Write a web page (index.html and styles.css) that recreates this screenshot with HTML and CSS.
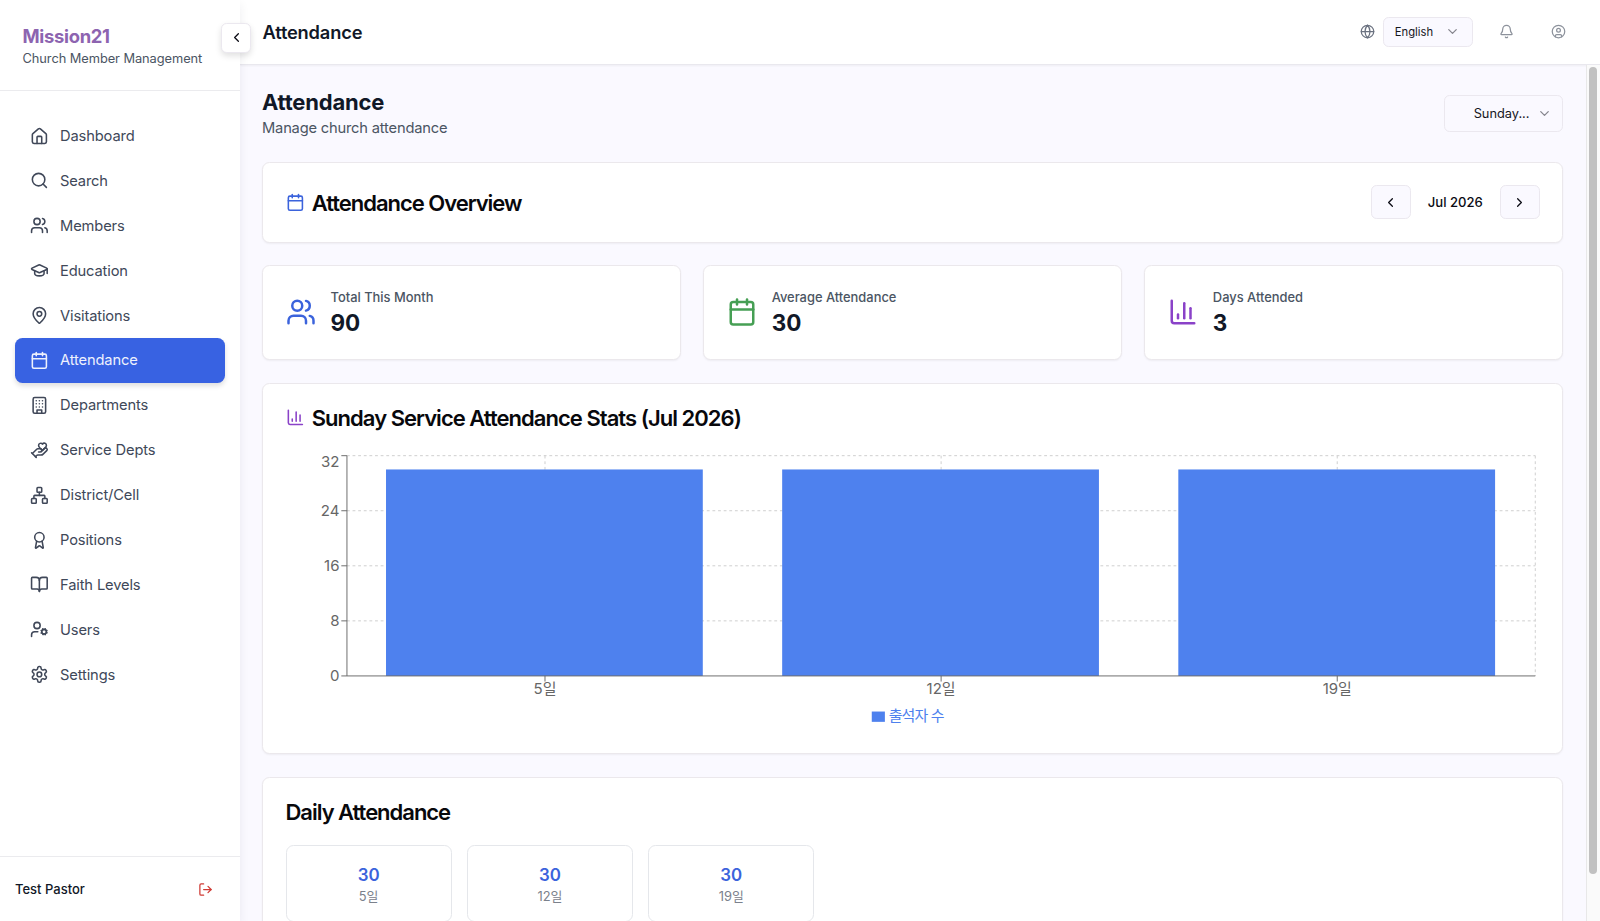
FILE: index.html
```html
<!DOCTYPE html>
<html lang="en">
<head>
    <meta charset="UTF-8">
    <meta name="viewport" content="width=device-width, initial-scale=1.0">
    <title>Mission21 - Attendance</title>
    <link rel="stylesheet" href="styles.css">
</head>
<body>
    <!-- icons -->
    <svg class="sprite" width="0" height="0">
        <symbol id="home" viewBox="0 0 24 24"><path d="M15 21v-8a1 1 0 0 0-1-1h-4a1 1 0 0 0-1 1v8"/><path d="M3 10a2 2 0 0 1 .709-1.528l7-5.999a2 2 0 0 1 2.582 0l7 5.999A2 2 0 0 1 21 10v9a2 2 0 0 1-2 2H5a2 2 0 0 1-2-2z"/></symbol>
        <symbol id="search" viewBox="0 0 24 24"><circle cx="11" cy="11" r="8"/><path d="m21 21-4.3-4.3"/></symbol>
        <symbol id="users" viewBox="0 0 24 24"><path d="M16 21v-2a4 4 0 0 0-4-4H6a4 4 0 0 0-4 4v2"/><circle cx="9" cy="7" r="4"/><path d="M22 21v-2a4 4 0 0 0-3-3.87"/><path d="M16 3.13a4 4 0 0 1 0 7.75"/></symbol>
        <symbol id="cap" viewBox="0 0 24 24"><path d="M21.42 10.922a1 1 0 0 0-.019-1.838L12.83 5.18a2 2 0 0 0-1.66 0L2.6 9.08a1 1 0 0 0 0 1.832l8.57 3.908a2 2 0 0 0 1.66 0z"/><path d="M22 10v6"/><path d="M6 12.5V16a6 3 0 0 0 12 0v-3.5"/></symbol>
        <symbol id="pin" viewBox="0 0 24 24"><path d="M20 10c0 4.993-5.539 10.193-7.399 11.799a1 1 0 0 1-1.202 0C9.539 20.193 4 14.993 4 10a8 8 0 0 1 16 0"/><circle cx="12" cy="10" r="3"/></symbol>
        <symbol id="calendar" viewBox="0 0 24 24"><path d="M8 2v4"/><path d="M16 2v4"/><rect width="18" height="18" x="3" y="4" rx="2"/><path d="M3 10h18"/></symbol>
        <symbol id="building" viewBox="0 0 24 24"><rect width="16" height="20" x="4" y="2" rx="2"/><path d="M9 22v-4h6v4"/><path d="M8 6h.01M16 6h.01M12 6h.01M12 10h.01M12 14h.01M16 10h.01M16 14h.01M8 10h.01M8 14h.01"/></symbol>
        <symbol id="hand" viewBox="0 0 24 24"><path d="M11 14h2a2 2 0 1 0 0-4h-3c-.6 0-1.1.2-1.4.6L3 16"/><path d="m7 20 1.6-1.4c.3-.4.8-.6 1.4-.6h4c1.1 0 2.1-.4 2.8-1.2l4.6-4.4a2 2 0 0 0-2.75-2.91l-4.2 3.9"/><path d="m2 15 6 6"/><path d="M19.5 8.5c.7-.7 1.5-1.6 1.5-2.7A2.73 2.73 0 0 0 16 4a2.78 2.78 0 0 0-5 1.8c0 1.2.8 2 1.5 2.8L16 12Z"/></symbol>
        <symbol id="network" viewBox="0 0 24 24"><rect x="16" y="16" width="6" height="6" rx="1"/><rect x="2" y="16" width="6" height="6" rx="1"/><rect x="9" y="2" width="6" height="6" rx="1"/><path d="M5 16v-3a1 1 0 0 1 1-1h12a1 1 0 0 1 1 1v3"/><path d="M12 12V8"/></symbol>
        <symbol id="award" viewBox="0 0 24 24"><path d="m15.477 12.89 1.515 8.526a.5.5 0 0 1-.81.47l-3.58-2.687a1 1 0 0 0-1.197 0l-3.586 2.686a.5.5 0 0 1-.81-.469l1.514-8.526"/><circle cx="12" cy="8" r="6"/></symbol>
        <symbol id="book" viewBox="0 0 24 24"><path d="M12 7v14"/><path d="M3 18a1 1 0 0 1-1-1V4a1 1 0 0 1 1-1h5a4 4 0 0 1 4 4 4 4 0 0 1 4-4h5a1 1 0 0 1 1 1v13a1 1 0 0 1-1 1h-6a3 3 0 0 0-3 3 3 3 0 0 0-3-3z"/></symbol>
        <symbol id="usercog" viewBox="0 0 24 24"><circle cx="18" cy="15" r="3"/><circle cx="9" cy="7" r="4"/><path d="M10 15H6a4 4 0 0 0-4 4v2"/><path d="m21.7 16.4-.9-.3M15.2 13.9l-.9-.3M16.6 18.7l.3-.9M19.1 12.2l.3-.9M19.6 18.7l-.4-1M16.8 12.3l-.4-1M14.3 16.6l1-.4M20.7 13.8l1-.4"/></symbol>
        <symbol id="settings" viewBox="0 0 24 24"><path d="M12.22 2h-.44a2 2 0 0 0-2 2v.18a2 2 0 0 1-1 1.73l-.43.25a2 2 0 0 1-2 0l-.15-.08a2 2 0 0 0-2.73.73l-.22.38a2 2 0 0 0 .73 2.73l.15.1a2 2 0 0 1 1 1.72v.51a2 2 0 0 1-1 1.74l-.15.09a2 2 0 0 0-.73 2.73l.22.38a2 2 0 0 0 2.73.73l.15-.08a2 2 0 0 1 2 0l.43.25a2 2 0 0 1 1 1.73V20a2 2 0 0 0 2 2h.44a2 2 0 0 0 2-2v-.18a2 2 0 0 1 1-1.73l.43-.25a2 2 0 0 1 2 0l.15.08a2 2 0 0 0 2.73-.73l.22-.39a2 2 0 0 0-.73-2.73l-.15-.08a2 2 0 0 1-1-1.74v-.5a2 2 0 0 1 1-1.74l.15-.09a2 2 0 0 0 .73-2.73l-.22-.38a2 2 0 0 0-2.73-.73l-.15.08a2 2 0 0 1-2 0l-.43-.25a2 2 0 0 1-1-1.73V4a2 2 0 0 0-2-2z"/><circle cx="12" cy="12" r="3"/></symbol>
        <symbol id="logout" viewBox="0 0 24 24"><path d="M9 21H5a2 2 0 0 1-2-2V5a2 2 0 0 1 2-2h4"/><path d="m16 17 5-5-5-5"/><path d="M21 12H9"/></symbol>
        <symbol id="globe" viewBox="0 0 24 24"><circle cx="12" cy="12" r="10"/><path d="M12 2a14.5 14.5 0 0 0 0 20 14.5 14.5 0 0 0 0-20"/><path d="M2 12h20"/></symbol>
        <symbol id="bell" viewBox="0 0 24 24"><path d="M10.268 21a2 2 0 0 0 3.464 0"/><path d="M3.262 15.326A1 1 0 0 0 4 17h16a1 1 0 0 0 .74-1.673C19.41 13.956 18 12.499 18 8A6 6 0 0 0 6 8c0 4.499-1.411 5.956-2.738 7.326"/></symbol>
        <symbol id="user" viewBox="0 0 24 24"><circle cx="12" cy="12" r="10"/><circle cx="12" cy="10" r="3"/><path d="M7 20.662V19a2 2 0 0 1 2-2h6a2 2 0 0 1 2 2v1.662"/></symbol>
        <symbol id="chart" viewBox="0 0 24 24"><path d="M3 3v16a2 2 0 0 0 2 2h16"/><path d="M18 17V9"/><path d="M13 17V5"/><path d="M8 17v-3"/></symbol>
        <symbol id="left" viewBox="0 0 24 24"><path d="m15 18-6-6 6-6"/></symbol>
        <symbol id="right" viewBox="0 0 24 24"><path d="m9 18 6-6-6-6"/></symbol>
        <symbol id="down" viewBox="0 0 24 24"><path d="m6 9 6 6 6-6"/></symbol>
    </svg>

    <div class="app">
        <aside class="sidebar">
            <div class="brand">
                <h1>Mission21</h1>
                <p>Church Member Management</p>
            </div>
            <button class="toggle"><svg class="icon small"><use href="#left"/></svg></button>
            <nav class="nav">
                <a class="nav-item"><svg class="icon"><use href="#home"/></svg><span>Dashboard</span></a>
                <a class="nav-item"><svg class="icon"><use href="#search"/></svg><span>Search</span></a>
                <a class="nav-item"><svg class="icon"><use href="#users"/></svg><span>Members</span></a>
                <a class="nav-item"><svg class="icon"><use href="#cap"/></svg><span>Education</span></a>
                <a class="nav-item"><svg class="icon"><use href="#pin"/></svg><span>Visitations</span></a>
                <a class="nav-item active"><svg class="icon"><use href="#calendar"/></svg><span>Attendance</span></a>
                <a class="nav-item"><svg class="icon"><use href="#building"/></svg><span>Departments</span></a>
                <a class="nav-item"><svg class="icon"><use href="#hand"/></svg><span>Service Depts</span></a>
                <a class="nav-item"><svg class="icon"><use href="#network"/></svg><span>District/Cell</span></a>
                <a class="nav-item"><svg class="icon"><use href="#award"/></svg><span>Positions</span></a>
                <a class="nav-item"><svg class="icon"><use href="#book"/></svg><span>Faith Levels</span></a>
                <a class="nav-item"><svg class="icon"><use href="#usercog"/></svg><span>Users</span></a>
                <a class="nav-item"><svg class="icon"><use href="#settings"/></svg><span>Settings</span></a>
            </nav>
            <div class="account">
                <span>Test Pastor</span>
                <svg class="icon small"><use href="#logout"/></svg>
            </div>
        </aside>

        <div class="main">
            <header class="topbar">
                <h2>Attendance</h2>
                <div class="tools">
                    <svg class="icon small globe"><use href="#globe"/></svg>
                    <button class="select lang"><span>English</span><svg class="icon small"><use href="#down"/></svg></button>
                    <svg class="icon small bell"><use href="#bell"/></svg>
                    <svg class="icon small user"><use href="#user"/></svg>
                </div>
            </header>

            <div class="body">
                <main class="content">
                    <div class="page-head">
                        <div>
                            <h1>Attendance</h1>
                            <p>Manage church attendance</p>
                        </div>
                        <button class="select service"><span>Sunday...</span><svg class="icon small"><use href="#down"/></svg></button>
                    </div>

                    <section class="card overview">
                        <h3 class="title"><svg class="icon blue"><use href="#calendar"/></svg><span>Attendance Overview</span></h3>
                        <div class="month">
                            <button class="step"><svg class="icon small"><use href="#left"/></svg></button>
                            <span>Jul 2026</span>
                            <button class="step"><svg class="icon small"><use href="#right"/></svg></button>
                        </div>
                    </section>

                    <div class="stats">
                        <section class="card stat">
                            <svg class="icon big blue"><use href="#users"/></svg>
                            <div><p>Total This Month</p><strong>90</strong></div>
                        </section>
                        <section class="card stat">
                            <svg class="icon big green"><use href="#calendar"/></svg>
                            <div><p>Average Attendance</p><strong>30</strong></div>
                        </section>
                        <section class="card stat">
                            <svg class="icon big purple"><use href="#chart"/></svg>
                            <div><p>Days Attended</p><strong>3</strong></div>
                        </section>
                    </div>

                    <section class="card chart-card">
                        <h3 class="title"><svg class="icon purple"><use href="#chart"/></svg><span>Sunday Service Attendance Stats (Jul 2026)</span></h3>
                        <svg class="chart" viewBox="0 0 1338 300">
                            <g class="grid">
                                <path d="M65 5H1333M65 63.75H1333M65 122.5H1333M65 181.25H1333"/>
                                <path d="M276.33 5V240M699 5V240M1121.67 5V240M1333 5V240"/>
                            </g>
                            <g class="bars">
                                <rect x="106.7" y="19.7" width="338" height="220.3"/>
                                <rect x="529.4" y="19.7" width="338" height="220.3"/>
                                <rect x="952.1" y="19.7" width="338" height="220.3"/>
                            </g>
                            <path class="axis" d="M65 5V240H1333M59 5H65M59 63.75H65M59 122.5H65M59 181.25H65M59 240H65M276.33 240V246M699 240V246M1121.67 240V246"/>
                            <g class="y-labels">
                                <text x="57" y="17.5">32</text>
                                <text x="57" y="69.5">24</text>
                                <text x="57" y="128.2">16</text>
                                <text x="57" y="187">8</text>
                                <text x="57" y="245.7">0</text>
                            </g>
                            <g class="x-labels">
                                <text x="276.33" y="259">5일</text>
                                <text x="699" y="259">12일</text>
                                <text x="1121.67" y="259">19일</text>
                            </g>
                            <rect class="legend" x="625" y="278" width="14" height="11"/>
                            <text class="legend" x="643" y="287.8">출석자 수</text>
                        </svg>
                    </section>

                    <section class="card daily">
                        <h3 class="title"><span>Daily Attendance</span></h3>
                        <div class="days">
                            <div class="day"><strong>30</strong><span>5일</span></div>
                            <div class="day"><strong>30</strong><span>12일</span></div>
                            <div class="day"><strong>30</strong><span>19일</span></div>
                        </div>
                    </section>
                </main>
                <div class="scrollbar"><div class="thumb"></div></div>
            </div>
        </div>
    </div>
</body>
</html>
```
FILE: styles.css
```css
*{
    box-sizing: border-box;
}
html{
    font-size: 15px;
}
body{
    margin: 0;
    font-family: Inter, "Noto Sans CJK KR", sans-serif;
    color: #0b0b14;
    background: #faf9ff;
    overflow: hidden;
}
h1, h2, h3, p{
    margin: 0;
}
button{
    font-family: inherit;
    color: inherit;
    padding: 0;
    display: flex;
    align-items: center;
    justify-content: center;
    background: #faf9ff;
    border: 1px solid #ebe8ef;
    border-radius: 5.6px;
}
.sprite{
    display: none;
}
.icon{
    width: 1.25rem;
    height: 1.25rem;
    flex: none;
    fill: none;
    stroke: currentColor;
    stroke-width: 2;
    stroke-linecap: round;
    stroke-linejoin: round;
}
.small{
    width: 1rem;
    height: 1rem;
}
.big{
    width: 2rem;
    height: 2rem;
}
.blue{
    color: #3b63dc;
}
.green{
    color: #469f54;
}
.purple{
    color: #8a42c8;
}

.app{
    display: flex;
    height: 921px;
}

/* sidebar */
.sidebar{
    position: relative;
    z-index: 2;
    width: 240px;
    flex: none;
    display: flex;
    flex-direction: column;
    background: #fff;
    box-shadow: 0 4px 10px rgba(20, 20, 50, 0.07);
}
.brand{
    height: 90.5px;
    padding: 23.3px 22.5px 0;
    border-bottom: 1px solid #ebebee;
}
.brand h1{
    font-size: 18.4px;
    line-height: 26px;
    font-weight: 700;
    letter-spacing: -0.3px;
    color: #8d64b0;
}
.brand p{
    font-size: 12.85px;
    line-height: 20px;
    letter-spacing: -0.07px;
    color: #4b5563;
    white-space: nowrap;
}
.toggle{
    position: absolute;
    left: 221px;
    top: 22.5px;
    width: 30px;
    height: 30px;
    background: #fff;
    box-shadow: 0 3px 6px rgba(0, 0, 0, 0.12);
}
.nav{
    flex: 1;
    padding: 23px 15px;
}
.nav-item{
    display: flex;
    align-items: center;
    gap: 11.25px;
    height: 44.9px;
    padding: 0 15px;
    border-radius: 7.5px;
    font-size: 14.7px;
    letter-spacing: -0.14px;
    color: #404859;
}
.nav-item.active{
    color: #eef1fd;
    background: #3862e2;
    box-shadow: 0 3px 5px rgba(0, 0, 0, 0.13);
}
.account{
    height: 65px;
    padding: 0 27px 0 15px;
    display: flex;
    align-items: center;
    justify-content: space-between;
    border-top: 1px solid #ebebee;
    font-size: 13px;
    font-weight: 500;
    color: #111827;
}
.account .icon{
    color: #cf3a34;
}

/* top bar */
.main{
    flex: 1;
    min-width: 0;
    display: flex;
    flex-direction: column;
}
.topbar{
    height: 64.5px;
    flex: none;
    padding: 0 34px 0 22.5px;
    display: flex;
    align-items: center;
    justify-content: space-between;
    background: #fff;
    border-bottom: 1px solid #e9e8ee;
    box-shadow: 0 1px 2px rgba(0, 0, 0, 0.05);
}
.topbar h2{
    font-size: 18.3px;
    font-weight: 600;
    letter-spacing: -0.18px;
    color: #111827;
}
.tools{
    display: flex;
    align-items: center;
    color: #8d929c;
}
.globe{
    color: #6b7280;
    margin-right: 7.5px;
}
.select span{
    color: #16161d;
}
.select .icon{
    color: #85858d;
}
.lang{
    width: 90px;
    height: 30px;
    padding: 0 11.25px;
    justify-content: space-between;
    font-size: 11.25px;
}
.bell{
    margin-left: 26px;
}
.user{
    margin-left: 37.5px;
}

/* page */
.body{
    flex: 1;
    min-height: 0;
    display: flex;
}
.content{
    flex: 1;
    min-width: 0;
    padding: 22.5px 23px 22.5px 22px;
    display: flex;
    flex-direction: column;
    gap: 22.5px;
    overflow: hidden;
}
.content > *{
    flex: none;
}
.scrollbar{
    width: 14px;
    padding: 2px 3px 0 2px;
    background: #fafafa;
    border-left: 1px solid #e8e8e8;
}
.thumb{
    width: 8px;
    height: 807px;
    border-radius: 4px;
    background: #c1c1c1;
}
.page-head{
    height: 52.5px;
    display: flex;
    align-items: center;
    justify-content: space-between;
}
.page-head h1{
    font-size: 22px;
    line-height: 30.5px;
    font-weight: 700;
    letter-spacing: -0.2px;
    color: #111827;
}
.page-head p{
    font-size: 14.7px;
    line-height: 22.5px;
    letter-spacing: -0.19px;
    color: #4b5563;
}
.service{
    width: 119.5px;
    height: 37.5px;
    padding-right: 10.5px;
    justify-content: flex-end;
    gap: 7px;
    font-size: 12.8px;
}
.card{
    background: #fff;
    border: 1px solid #ebe8ec;
    border-radius: 7.5px;
    padding: 22.5px;
    box-shadow: 0 1px 2px rgba(0, 0, 0, 0.05);
}
.title{
    display: flex;
    align-items: center;
    gap: 7.5px;
    height: 22.5px;
    font-size: 22px;
    line-height: 22.5px;
    font-weight: 600;
    letter-spacing: -1.02px;
    color: #08080c;
}
.title span{
    padding-top: 1px;
}
.overview{
    height: 80.5px;
    display: flex;
    align-items: center;
    justify-content: space-between;
}
.month{
    display: flex;
    align-items: center;
    font-size: 13.1px;
    font-weight: 500;
}
.month span{
    width: 89.5px;
    text-align: center;
}
.step{
    width: 39.5px;
    height: 33.75px;
}
.stats{
    display: grid;
    grid-template-columns: repeat(3, 1fr);
    gap: 22.5px;
}
.stat{
    height: 95px;
    padding-top: 22px;
    display: flex;
    align-items: center;
    gap: 15px;
}
.stat p{
    padding-top: 1px;
    font-size: 12.9px;
    line-height: 18.75px;
    font-weight: 500;
    color: #4b5563;
}
.stat strong{
    display: block;
    font-size: 22.5px;
    line-height: 29px;
    font-weight: 700;
    color: #111827;
}
.chart-card{
    height: 371.5px;
}
.chart-card .title{
    letter-spacing: -0.97px;
}
.chart{
    display: block;
    width: 100%;
    margin-top: 22.5px;
    font-size: 16px;
}
.grid path{
    fill: none;
    stroke: #ccc;
    stroke-dasharray: 3 3;
}
.bars rect, .legend{
    fill: #4e81ee;
}
text.legend{
    letter-spacing: -0.9px;
}
.axis{
    fill: none;
    stroke: #666;
}
.y-labels, .x-labels{
    fill: #666;
}
.y-labels{
    text-anchor: end;
}
.x-labels{
    text-anchor: middle;
}
.daily{
    height: 200px;
}
.days{
    display: grid;
    grid-template-columns: repeat(7, 1fr);
    gap: 15px;
    margin-top: 22.5px;
}
.day{
    height: 77px;
    padding-top: 1px;
    display: flex;
    flex-direction: column;
    align-items: center;
    justify-content: center;
    border: 1px solid #e5e7eb;
    border-radius: 7.5px;
}
.day strong{
    font-size: 16.9px;
    line-height: 26px;
    font-weight: 600;
    color: #3b63dc;
}
.day span{
    font-size: 12.9px;
    line-height: 18.75px;
    color: #7b818c;
}
```
